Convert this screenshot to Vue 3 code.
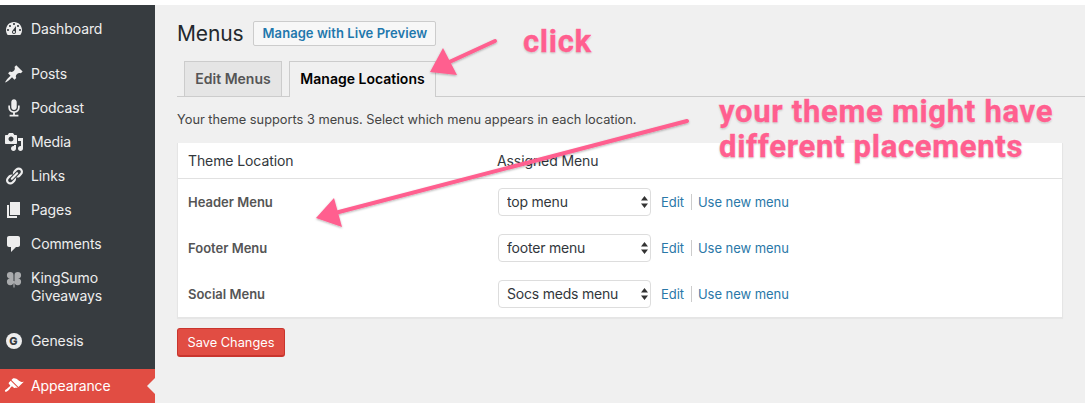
<script setup>
const items = [
  { label: ['Dashboard'], icon: 'dash', cls: 'gap-after' },
  { label: ['Posts'], icon: 'post' },
  { label: ['Podcast'], icon: 'mic' },
  { label: ['Media'], icon: 'media' },
  { label: ['Links'], icon: 'link' },
  { label: ['Pages'], icon: 'page' },
  { label: ['Comments'], icon: 'comment' },
  { label: ['KingSumo', 'Giveaways'], icon: 'clover', cls: 'gap-after tall' },
  { label: ['Genesis'], icon: 'genesis', cls: 'gap-after' },
  { label: ['Appearance'], icon: 'brush', cls: 'active' }
]
const paths = {
  dash: 'M3.76 16h12.48c1.1-1.37 1.76-3.11 1.76-5 0-4.42-3.58-8-8-8s-8 3.58-8 8c0 1.89.66 3.63 1.76 5zM10 4c.55 0 1 .45 1 1s-.45 1-1 1-1-.45-1-1 .45-1 1-1zM6 6c.55 0 1 .45 1 1s-.45 1-1 1-1-.45-1-1 .45-1 1-1zm8 0c.55 0 1 .45 1 1s-.45 1-1 1-1-.45-1-1 .45-1 1-1zm-5.37 5.55L12 7v6c0 1.1-.9 2-2 2s-2-.9-2-2c0-.57.24-1.08.63-1.45zM4 10c.55 0 1 .45 1 1s-.45 1-1 1-1-.45-1-1 .45-1 1-1zm12 0c.55 0 1 .45 1 1s-.45 1-1 1-1-.45-1-1 .45-1 1-1zm-5 3c0-.55-.45-1-1-1s-1 .45-1 1 .45 1 1 1 1-.45 1-1z',
  post: 'M10.44 3.02l1.82-1.82 6.36 6.35-1.83 1.82c-1.05-.68-2.48-.57-3.41.36l-.75.75c-.92.93-1.04 2.35-.35 3.41l-1.83 1.82-2.41-2.41-2.8 2.79c-.42.42-3.38 2.71-3.8 2.29s1.86-3.39 2.28-3.81l2.79-2.79L4.1 9.36l1.83-1.82c1.05.69 2.48.57 3.4-.36l.75-.75c.93-.92 1.05-2.35.36-3.41z',
  mic: 'M10 1.2c-1.500 0-2.700 1.200-2.700 2.700v5.300c0 1.500 1.200 2.700 2.700 2.700s2.700-1.200 2.700-2.700V3.900c0-1.500-1.200-2.700-2.700-2.700zM4.300 7.500h1.700v1.900c0 2.200 1.800 3.900 4 3.900s4-1.700 4-3.900V7.500h1.700v1.900c0 2.700-2 5-4.800 5.400v2h3.500v1.700H5.600v-1.700h3.500v-2c-2.800-.4-4.800-2.700-4.800-5.400z',
  media: 'M13 11V4c0-.55-.45-1-1-1h-1.67L9 1H5L3.67 3H2c-.55 0-1 .45-1 1v7c0 .55.45 1 1 1h10c.55 0 1-.45 1-1zM7 4.500c1.380 0 2.500 1.120 2.500 2.500S8.380 9.500 7 9.500 4.500 8.380 4.500 7 5.620 4.500 7 4.500zM14 6h5v10.500c0 1.380-1.120 2.500-2.500 2.500S14 17.880 14 16.500s1.120-2.500 2.500-2.500c.17 0 .34.02.5.05V9h-3V6zm-4 8.050V13h2v3.500c0 1.380-1.120 2.500-2.500 2.500S7 17.880 7 16.500 8.120 14 9.500 14c.17 0 .34.02.5.05z',
  link: 'M17.740 2.760c1.680 1.690 1.680 4.410 0 6.100l-1.530 1.520c-1.120 1.120-2.700 1.470-4.140 1.090l2.620-2.610.76-.77.76-.76c.84-.84.84-2.200 0-3.040-.84-.85-2.200-.85-3.040 0l-.77.76-3.380 3.380c-.37-1.440-.02-3.020 1.100-4.140l1.520-1.530c1.690-1.680 4.420-1.680 6.100 0zM8.590 13.430l5.340-5.340c.42-.42.42-1.100 0-1.520-.44-.43-1.130-.39-1.530 0l-5.330 5.340c-.42.42-.42 1.100 0 1.520.44.43 1.130.39 1.520 0zm-.76 2.290l4.140-4.150c.38 1.440.03 3.020-1.090 4.140l-1.520 1.530c-1.690 1.680-4.410 1.680-6.100 0-1.680-1.680-1.680-4.420 0-6.100l1.530-1.520c1.120-1.120 2.700-1.470 4.140-1.100l-4.140 4.150c-.85.84-.85 2.200 0 3.050.84.84 2.200.84 3.040 0z',
  page: 'M6 15V2h10v13H6zm-1 1h8v2H3V5h2v11z',
  comment: 'M5 2h9c1.100 0 2 .9 2 2v7c0 1.100-.9 2-2 2h-2l-5 5v-5H5c-1.100 0-2-.9-2-2V4c0-1.100.9-2 2-2z',
  brush: 'M14.480 11.060L7.410 3.990l1.500-1.500c.5-.56 2.300-.47 3.510.32 1.210.8 1.430 1.280 2.910 2.100 1.180.64 2.450 1.260 4.450.85zm-.71.71L6.700 4.700 4.930 6.470c-.39.39-.39 1.020 0 1.410l1.060 1.060c.39.39.39 1.030 0 1.420-.6.6-1.430 1.110-2.210 1.690-.35.26-.7.53-1.010.84C1.430 13.230.4 14.840 1.120 15.560c.71.71 2.320-.31 3.670-1.660.31-.31.58-.66.84-1.010.58-.78 1.090-1.610 1.690-2.210.39-.39 1.030-.39 1.420 0l1.060 1.060c.39.39 1.020.39 1.410 0z',
  clover: 'M9.500 9.300V6.200A3.300 3.300 0 1 0 6 9.500h3.500zM10.500 9.300V6.200A3.300 3.300 0 1 1 14 9.500h-3.500zM9.500 9.800v3A3.300 3.300 0 1 1 6 9.600h3.500zM10.500 9.800v3A3.300 3.300 0 1 0 14 9.600h-3.500zM9.400 12h1.200v6.500H9.400z'
}
const rows = [
  { name: 'Header Menu', value: 'top menu' },
  { name: 'Footer Menu', value: 'footer menu' },
  { name: 'Social Menu', value: 'Socs meds menu' }
]
</script>

<template>
  <div class="page">
    <div class="strip"></div>
    <div class="shell">
      <aside class="side">
        <div v-for="item in items" :key="item.label[0]" class="item" :class="item.cls">
          <span class="ic">
            <span v-if="item.icon === 'genesis'" class="genesis">G</span>
            <svg v-else viewBox="0 0 20 20" width="20" height="20" :class="{ dim: item.icon === 'clover' }"><path :d="paths[item.icon]" /></svg>
          </span>
          <span class="lab"><span v-for="l in item.label" :key="l">{{ l }}</span></span>
        </div>
      </aside>

      <main class="main">
        <div class="head">
          <h1>Menus</h1>
          <a class="live">Manage with Live Preview</a>
        </div>
        <div class="tabs">
          <a class="tab">Edit Menus</a>
          <a class="tab on">Manage Locations</a>
        </div>
        <p class="note">Your theme supports 3 menus. Select which menu appears in each location.</p>
        <div class="box">
          <div class="thead"><span>Theme Location</span><span>Assigned Menu</span></div>
          <div class="tbody">
            <div v-for="r in rows" :key="r.name" class="row">
              <b>{{ r.name }}</b>
              <div class="ctl">
                <div class="sel">
                  <select><option>{{ r.value }}</option></select>
                  <svg viewBox="0 0 7 12" width="7" height="12"><path d="M3.500 0L7 4.500H0zM3.500 12L0 7.500h7z" /></svg>
                </div>
                <a class="lnk">Edit</a><i></i><a class="lnk">Use new menu</a>
              </div>
            </div>
          </div>
        </div>
        <button class="save">Save Changes</button>
      </main>
    </div>

    <svg class="arrows" viewBox="0 0 1085 403" width="1085" height="403">
      <defs>
        <filter id="sh" x="-20%" y="-20%" width="140%" height="140%">
          <feDropShadow dx="0" dy="1" stdDeviation="1" flood-color="#000" flood-opacity=".3" />
        </filter>
      </defs>
      <g fill="#ff5f8f" stroke="#ff5f8f" filter="url(#sh)">
        <line x1="495" y1="41" x2="445" y2="64" stroke-width="4" stroke-linecap="round" />
        <path d="M430 72L443 48L457 75Z" stroke-width="0" />
        <line x1="687" y1="121" x2="335" y2="213" stroke-width="4" stroke-linecap="round" />
        <path d="M316 218L334 198L342 227Z" stroke-width="0" />
      </g>
    </svg>
    <div class="note-a click">click</div>
    <div class="note-a theme">your theme might have<br />different placements</div>
  </div>
</template>

<style>
html, body { margin: 0; background: #fff; }
</style>

<style scoped>
.page {
  position: relative;
  width: 1085px;
  height: 403px;
  overflow: hidden;
  font-family: Inter, "Liberation Sans", sans-serif;
  font-size: 13px;
  color: #444;
}
.strip { height: 5px; background: #fff; }
.shell { display: flex; height: 398px; }
.side {
  width: 155px;
  flex: none;
  background: #373c40;
  padding-top: 7px;
  box-sizing: border-box;
  color: #eee;
  font-size: 14px;
  letter-spacing: -.1px;
}
.item {
  position: relative;
  display: flex;
  height: 34px;
  align-items: center;
}
.item.gap-after { margin-bottom: 11px; }
.item.tall { height: 52px; align-items: flex-start; padding-top: 8px; box-sizing: border-box; }
.item.active { background: #e14d43; color: #fff; }
.item.active::after {
  content: "";
  position: absolute;
  right: 0;
  top: 9px;
  border: 8px solid transparent;
  border-right-color: #f0f0f0;
  border-left: 0;
}
.ic { width: 31px; display: flex; justify-content: center; flex: none; padding-right: 5px; padding-left: 1px; box-sizing: border-box; }
.ic svg { fill: #eee; display: block; }
.active .ic svg { fill: #fff; }
.ic svg.dim { fill: #a9abad; }
.genesis {
  width: 16px;
  height: 16px;
  border-radius: 50%;
  background: #eee;
  color: #373c40;
  font-size: 11px;
  font-weight: 800;
  line-height: 16px;
  text-align: center;
  letter-spacing: 0;
}
.lab { display: flex; flex-direction: column; line-height: 18px; }
.main {
  flex: 1;
  background: #f0f0f0;
  padding-left: 22px;
  padding-right: 22px;
  min-width: 0;
}
.head { display: flex; align-items: center; height: 25px; margin-top: 16px; gap: 10px; }
h1 { margin: 0; font-size: 21px; font-weight: 400; color: #23282d; letter-spacing: -.15px; }
.live {
  box-sizing: border-box;
  width: 183px;
  height: 25px;
  line-height: 23px;
  text-align: center;
  border: 1px solid #ccc;
  border-radius: 2px;
  background: #f7f7f7;
  color: #1f78ad;
  font-size: 13px;
  font-weight: 600;
  letter-spacing: .05px;
}
.tabs {
  display: flex;
  gap: 7px;
  margin-top: 15px;
  height: 35px;
  padding-left: 7px;
  margin-right: -22px;
  border-bottom: 1px solid #ccc;
}
.tab {
  box-sizing: border-box;
  height: 35px;
  width: 98px;
  line-height: 34px;
  text-align: center;
  border: 1px solid #ccc;
  border-bottom: 0;
  background: #e5e5e5;
  color: #555;
  font-weight: 600;
  font-size: 14px;
}
.tab.on {
  width: 147px;
  height: 36px;
  background: #f0f0f0;
  color: #000;
}
.note { margin: 14px 0 0; line-height: 18px; color: #444; font-size: 12.8px; }
.box {
  margin-top: 14px;
  background: #fff;
  border: 1px solid #e5e5e5;
  border-width: 0 1px 1px 1px;
  height: 175px;
  box-sizing: border-box;
  box-shadow: 0 1px 1px rgba(0,0,0,.04);
}
.thead {
  display: grid;
  grid-template-columns: 309px 1fr;
  padding-left: 10px;
  height: 36px;
  line-height: 36px;
  box-sizing: border-box;
  border-bottom: 1px solid #e1e1e1;
  font-size: 14px;
  letter-spacing: -.1px;
  color: #32373c;
}
.row {
  display: grid;
  grid-template-columns: 310px 1fr;
  padding-left: 10px;
  height: 46px;
  align-items: center;
}
.row b { font-weight: 600; color: #555; }
.ctl { display: flex; align-items: center; }
.sel { position: relative; width: 153px; height: 28px; }
.sel select {
  appearance: none;
  width: 100%;
  height: 100%;
  box-sizing: border-box;
  border: 1px solid #ddd;
  border-radius: 4px;
  background: #fff;
  padding: 0 0 2px 8px;
  font: inherit;
  font-size: 14px;
  letter-spacing: -.2px;
  color: #32373c;
}
.sel svg { position: absolute; right: 3px; top: 8px; fill: #333; }
.lnk { color: #2a78a8; font-size: 13px; letter-spacing: -.05px; }
.sel + .lnk { margin-left: 10px; }
.ctl i { width: 1px; height: 16px; background: #ccc; margin: 0 6px 0 7px; }
.save {
  display: block;
  box-sizing: border-box;
  margin-top: 10px;
  width: 108px;
  height: 29px;
  border: 1px solid #c9352d;
  border-bottom-width: 2px;
  border-radius: 3px;
  background: #e14d43;
  color: #fff;
  font: inherit;
  font-size: 12.8px;
  padding: 0;
}
.arrows { position: absolute; left: 0; top: 0; pointer-events: none; }
.note-a {
  position: absolute;
  font-family: Roboto, sans-serif;
  font-weight: 700;
  color: #ff5f8f;
  font-size: 31px;
  line-height: 35px;
  letter-spacing: .7px;
  white-space: nowrap;
  -webkit-text-stroke: .4px #ff5f8f;
  text-shadow: 0 0 2px #fff, 0 0 2px #fff, 0 1px 2px rgba(0,0,0,.35);
}
.click { left: 523px; top: 24px; }
.theme { left: 719px; top: 94px; }
</style>
